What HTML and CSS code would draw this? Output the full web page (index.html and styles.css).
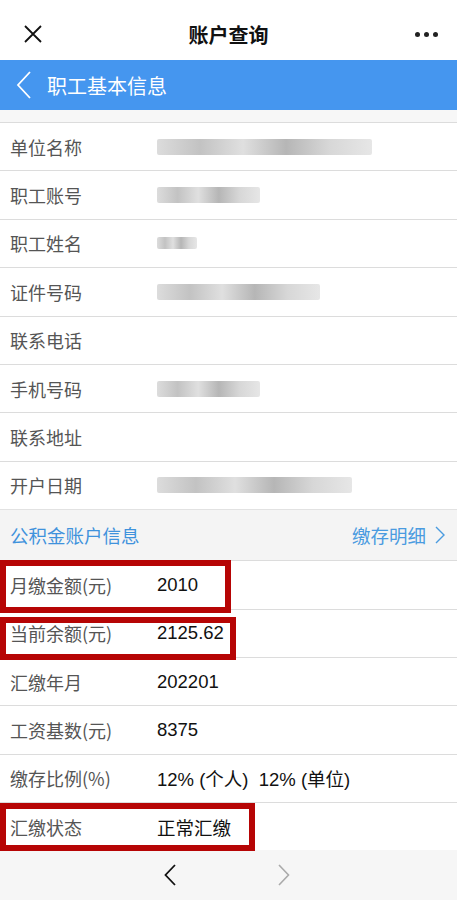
FILE: index.html
```html
<!DOCTYPE html>
<html lang="zh-CN">
<head>
    <meta charset="UTF-8">
    <meta name="viewport" content="width=device-width, initial-scale=1.0">
    <title>账户查询</title>
    <link rel="stylesheet" href="styles.css">
</head>
<body>

<div class="topbar">
    <svg class="close-icon" width="18" height="18" viewBox="0 0 18 18">
        <path d="M1 1 L17 17 M17 1 L1 17" stroke="#111" stroke-width="1.8" fill="none"/>
    </svg>
    <div class="title">账户查询</div>
    <div class="more"><span></span><span></span><span></span></div>
</div>

<div class="subbar">
    <svg class="back-icon" width="16" height="28" viewBox="0 0 16 28">
        <path d="M14 1 L2 14 L14 27" stroke="#fff" stroke-width="1.8" fill="none"/>
    </svg>
    <span>职工基本信息</span>
</div>

<div class="gap"></div>

<div class="list">
    <div class="row"><div class="label">单位名称</div><div class="value"><span class="blur" style="width:215px"></span></div></div>
    <div class="row"><div class="label">职工账号</div><div class="value"><span class="blur" style="width:103px"></span></div></div>
    <div class="row"><div class="label">职工姓名</div><div class="value"><span class="blur small" style="width:40px"></span></div></div>
    <div class="row"><div class="label">证件号码</div><div class="value"><span class="blur" style="width:163px"></span></div></div>
    <div class="row"><div class="label">联系电话</div><div class="value"></div></div>
    <div class="row"><div class="label">手机号码</div><div class="value"><span class="blur" style="width:103px"></span></div></div>
    <div class="row"><div class="label">联系地址</div><div class="value"></div></div>
    <div class="row"><div class="label">开户日期</div><div class="value"><span class="blur" style="width:195px"></span></div></div>
</div>

<div class="section">
    <span class="section-title">公积金账户信息</span>
    <span class="section-link">缴存明细
        <svg width="10" height="18" viewBox="0 0 10 18"><path d="M1 1 L9 9 L1 17" stroke="#4a9be0" stroke-width="1.4" fill="none"/></svg>
    </span>
</div>

<div class="list">
    <div class="row"><div class="label">月缴金额(元)</div><div class="value num">2010</div><div class="mark mark-1"></div></div>
    <div class="row"><div class="label">当前余额(元)</div><div class="value num">2125.62</div><div class="mark mark-2"></div></div>
    <div class="row"><div class="label">汇缴年月</div><div class="value num">202201</div></div>
    <div class="row"><div class="label">工资基数(元)</div><div class="value num">8375</div></div>
    <div class="row"><div class="label">缴存比例(%)</div><div class="value num">12% (个人)&nbsp;&nbsp;12% (单位)</div></div>
    <div class="row"><div class="label">汇缴状态</div><div class="value">正常汇缴</div><div class="mark mark-3"></div></div>
</div>

<div class="bottombar">
    <svg width="12" height="22" viewBox="0 0 12 22"><path d="M11 1 L1.5 11 L11 21" stroke="#111" stroke-width="1.8" fill="none"/></svg>
    <svg width="12" height="22" viewBox="0 0 12 22"><path d="M1 1 L10.5 11 L1 21" stroke="#aaa" stroke-width="1.6" fill="none"/></svg>
</div>

</body>
</html>
```

FILE: styles.css
```css
body {
    font-family: "Noto Sans CJK SC", "Liberation Sans", sans-serif;
    background-color: #f4f4f4;
    margin: 0;
    padding: 0;
    height: 900px;
    overflow: hidden;
}
.topbar {
    height: 60px;
    background-color: #fff;
    display: flex;
    align-items: center;
    justify-content: space-between;
    padding: 0 19px 0 24px;
    position: relative;
}
.close-icon {
    margin-top: 8px;
}
.title {
    position: absolute;
    left: 0;
    right: 0;
    text-align: center;
    font-size: 20px;
    font-weight: 700;
    color: #111;
    padding-top: 8px;
    pointer-events: none;
}
.more {
    display: flex;
    gap: 4px;
    margin-top: 8px;
}
.more span {
    width: 5px;
    height: 5px;
    border-radius: 50%;
    background-color: #222;
}
.subbar {
    height: 50px;
    background-color: #4596ef;
    color: #fff;
    display: flex;
    align-items: center;
    padding-left: 16px;
    font-size: 20px;
}
.subbar span {
    margin-left: 15px;
}
.gap {
    height: 12px;
    background-color: #f7f7f7;
}
.list {
    background-color: #fff;
}
.row {
    height: 48.4px;
    box-sizing: border-box;
    border-top: 1px solid #dcdcdc;
    display: flex;
    align-items: center;
    position: relative;
}
.label {
    width: 147px;
    padding-left: 10px;
    font-size: 18px;
    color: #555;
}
.value {
    font-size: 18.5px;
    color: #111;
    display: flex;
    align-items: center;
}
.num {
    font-family: "Liberation Sans", "Noto Sans CJK SC", sans-serif;
    font-size: 18.5px;
}
.blur {
    display: inline-block;
    height: 16px;
    border-radius: 2px;
    background: linear-gradient(90deg, #d6d6d6, #b8b8b8 20%, #dadada 40%, #a9a9a9 60%, #d0d0d0 80%, #e2e2e2);
    opacity: 0.85;
}
.blur.small {
    height: 12px;
}
.section {
    height: 51px;
    box-sizing: border-box;
    border-top: 1px solid #e2e2e2;
    background-color: #f4f4f4;
    display: flex;
    align-items: center;
    justify-content: space-between;
    padding: 0 12px 0 10px;
    font-size: 18.5px;
    color: #3f92dc;
}
.section-link {
    display: flex;
    align-items: center;
    gap: 9px;
    color: #4a9be0;
}
.mark {
    position: absolute;
    left: 0;
    z-index: 2;
    box-sizing: border-box;
    border: 6px solid #b60505;
}
.mark-1 {
    top: -1px;
    width: 231px;
    height: 53px;
}
.mark-2 {
    top: 7px;
    width: 236px;
    height: 43px;
}
.mark-3 {
    top: 0;
    width: 255px;
    height: 48px;
}
.bottombar {
    height: 50px;
    background-color: #f6f6f6;
    display: flex;
    align-items: center;
    justify-content: center;
    gap: 102px;
    padding-right: 4px;
}
```
